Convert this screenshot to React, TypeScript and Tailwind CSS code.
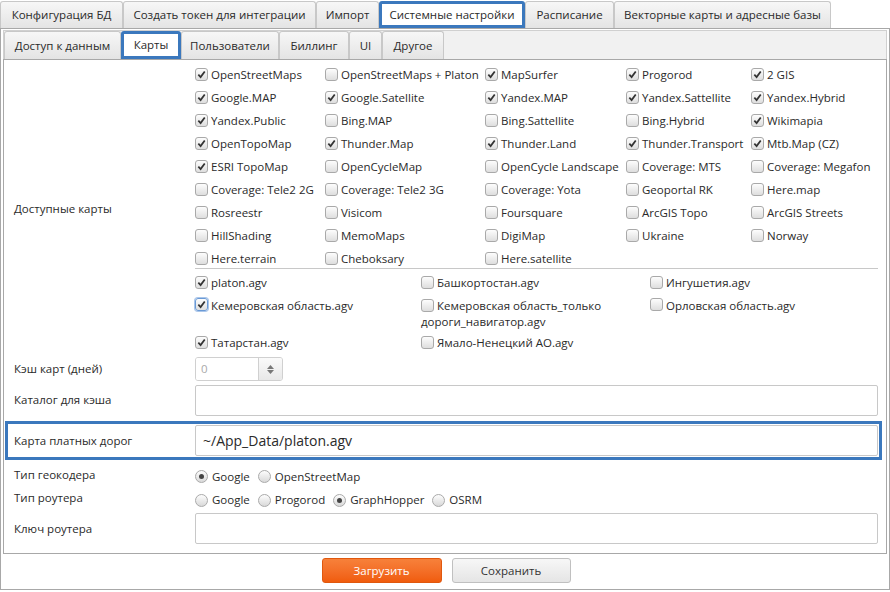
import React from 'react';

const topTabs = [
    { label: 'Конфигурация БД', w: 'w-[123px]' },
    { label: 'Создать токен для интеграции', w: 'w-[193px]' },
    { label: 'Импорт', w: 'w-[63px]' },
    { label: 'Системные настройки', w: 'w-[146px]', active: true },
    { label: 'Расписание', w: 'w-[89px]' },
    { label: 'Векторные карты и адресные базы', w: 'w-[217px]' },
];

const subTabs = [
    { label: 'Доступ к данным', w: 'w-[117px]' },
    { label: 'Карты', w: 'w-[60px]', active: true },
    { label: 'Пользователи', w: 'w-[98px]' },
    { label: 'Биллинг', w: 'w-[70px]' },
    { label: 'UI', w: 'w-[33px]' },
    { label: 'Другое', w: 'w-[62px]' },
];

// [label, checked]
const maps: [string, boolean][][] = [
    [['OpenStreetMaps', true], ['OpenStreetMaps + Platon', false], ['MapSurfer', true], ['Progorod', true], ['2 GIS', true]],
    [['Google.MAP', true], ['Google.Satellite', true], ['Yandex.MAP', true], ['Yandex.Sattellite', true], ['Yandex.Hybrid', true]],
    [['Yandex.Public', true], ['Bing.MAP', false], ['Bing.Sattellite', false], ['Bing.Hybrid', false], ['Wikimapia', true]],
    [['OpenTopoMap', true], ['Thunder.Map', true], ['Thunder.Land', true], ['Thunder.Transport', true], ['Mtb.Map (CZ)', true]],
    [['ESRI TopoMap', true], ['OpenCycleMap', false], ['OpenCycle Landscape', false], ['Coverage: MTS', false], ['Coverage: Megafon', false]],
    [['Coverage: Tele2 2G', false], ['Coverage: Tele2 3G', false], ['Coverage: Yota', false], ['Geoportal RK', false], ['Here.map', false]],
    [['Rosreestr', false], ['Visicom', false], ['Foursquare', false], ['ArcGIS Topo', false], ['ArcGIS Streets', false]],
    [['HillShading', false], ['MemoMaps', false], ['DigiMap', false], ['Ukraine', false], ['Norway', false]],
    [['Here.terrain', false], ['Cheboksary', false], ['Here.satellite', false]],
];

function Tab({ label, w, active }: { label: string; w: string; active?: boolean }) {
    return (
        <div
            className={`${w} h-full flex items-center justify-center rounded-t-[3px] ${
                active
                    ? 'bg-white border-[3px] border-[#3b78bd] rounded-none'
                    : 'bg-gradient-to-b from-[#f7f7f7] to-[#e4e4e4] border border-[#c8c8c8] border-b-0'
            }`}
        >
            {label}
        </div>
    );
}

function Checkbox({ checked, focused }: { checked: boolean; focused?: boolean }) {
    return (
        <span
            className={`w-[13px] h-[13px] shrink-0 rounded-[3px] border bg-gradient-to-b from-[#fdfdfd] to-[#dedede] flex items-center justify-center ${
                focused ? 'border-[#6a9ad6] shadow-[0_0_0_1px_#aac6ea]' : 'border-[#a9a9a9]'
            }`}
        >
            {checked && (
                <svg width="9" height="9" viewBox="0 0 10 10">
                    <path d="M1.5 5.2 L4 7.8 L8.6 1.6" fill="none" stroke="#333" strokeWidth="2" />
                </svg>
            )}
        </span>
    );
}

function Radio({ checked, label }: { checked?: boolean; label: string }) {
    return (
        <label className="flex items-center gap-[4px]">
            <span className="w-[13px] h-[13px] rounded-full border border-[#aaa] bg-gradient-to-b from-[#fdfdfd] to-[#d9d9d9] flex items-center justify-center">
                {checked && <span className="w-[5px] h-[5px] rounded-full bg-[#444]" />}
            </span>
            {label}
        </label>
    );
}

function CheckItem({ label, checked, focused }: { label: string; checked: boolean; focused?: boolean }) {
    return (
        <label className="flex items-center gap-[3px] h-[23px] whitespace-nowrap">
            <Checkbox checked={checked} focused={focused} />
            <span>{label}</span>
        </label>
    );
}

export default function App() {
    return (
        <div className="w-[890px] h-[592px] bg-white text-[11.5px] text-[#2a2a2a] font-['Open_Sans',sans-serif] overflow-hidden">
            {/* Top tabs */}
            <div className="flex h-[28px] items-end pt-[1px]">
                {topTabs.map((t) => (
                    <Tab key={t.label} {...t} />
                ))}
            </div>

            <div className="border border-[#a8a8a8] h-[562px] pt-[1px] px-[2px] flex flex-col">
                {/* Sub tabs */}
                <div className="flex h-[29px] bg-[#f1f1f1] border border-[#d0d0d0] border-b-0 items-end">
                    {subTabs.map((t) => (
                        <Tab key={t.label} {...t} />
                    ))}
                </div>

                {/* Content */}
                <div className="border border-[#a8a8a8] h-[495px] pt-[3px] pr-[8px]">
                    {/* Доступные карты */}
                    <div className="flex">
                        <div className="w-[191px] pl-[10px] flex items-center">Доступные карты</div>
                        <div className="flex-1">
                            <div className="grid grid-cols-[130px_160px_141px_125px_1fr] auto-rows-[23px] h-[206px] border-b border-[#c8c8c8]">
                                {maps.flat().map(([label, checked]) => (
                                    <CheckItem key={label} label={label} checked={checked} />
                                ))}
                            </div>
                            <div className="grid grid-cols-[226px_229px_1fr] pt-[2px] pb-[1px]">
                                <CheckItem label="platon.agv" checked />
                                <CheckItem label="Башкортостан.agv" checked={false} />
                                <CheckItem label="Ингушетия.agv" checked={false} />
                                <div className="h-[37px] pt-[4px] flex items-start gap-[3px]">
                                    <Checkbox checked focused />
                                    <span className="leading-[15px]">Кемеровская область.agv</span>
                                </div>
                                <div className="h-[37px] pt-[4px] leading-[16px]">
                                    <span className="inline-block align-[-2px] mr-[3px]">
                                        <Checkbox checked={false} />
                                    </span>
                                    Кемеровская область_только дороги_навигатор.agv
                                </div>
                                <div className="h-[37px] pt-[4px] flex items-start gap-[3px]">
                                    <Checkbox checked={false} />
                                    <span className="leading-[15px]">Орловская область.agv</span>
                                </div>
                                <CheckItem label="Татарстан.agv" checked />
                                <CheckItem label="Ямало-Ненецкий АО.agv" checked={false} />
                            </div>
                        </div>
                    </div>

                    {/* Кэш карт */}
                    <div className="flex items-center h-[28px]">
                        <div className="w-[191px] pl-[10px]">Кэш карт (дней)</div>
                        <div className="flex h-[24px] w-[88px] border border-[#d0d0d0] rounded-[3px] overflow-hidden">
                            <div className="flex-1 pl-[5px] flex items-center text-[#aaa] bg-white">0</div>
                            <div className="w-[24px] border-l border-[#d0d0d0] bg-gradient-to-b from-[#fafafa] to-[#e8e8e8] flex flex-col items-center justify-center gap-[1px]">
                                <svg width="7" height="4" viewBox="0 0 7 4"><path d="M0 4 L3.5 0 L7 4Z" fill="#777" /></svg>
                                <svg width="7" height="4" viewBox="0 0 7 4"><path d="M0 0 L3.5 4 L7 0Z" fill="#777" /></svg>
                            </div>
                        </div>
                    </div>

                    {/* Каталог */}
                    <div className="flex items-center h-[34px]">
                        <div className="w-[191px] pl-[10px]">Каталог для кэша</div>
                        <div className="flex-1 h-[31px] border border-[#c8c8c8] rounded-[2px]" />
                    </div>

                    {/* Карта платных дорог */}
                    <div className="mt-[4px] ml-[1px] mr-[-4px] border-[3px] border-[#3b78bd] flex items-center h-[39px]">
                        <div className="w-[187px] pl-[6px]">Карта платных дорог</div>
                        <div className="flex-1 mr-[1px] h-[31px] border border-[#c8c8c8] rounded-[2px] flex items-center pl-[7px] text-[14px]">
                            ~/App_Data/platon.agv
                        </div>
                    </div>

                    {/* Тип геокодера */}
                    <div className="flex items-center h-[23px] mt-[5px]">
                        <div className="w-[191px] pl-[10px] -mt-[4px]">Тип геокодера</div>
                        <div className="flex gap-[8px]">
                            <Radio checked label="Google" />
                            <Radio label="OpenStreetMap" />
                        </div>
                    </div>

                    {/* Тип роутера */}
                    <div className="flex items-center h-[24px]">
                        <div className="w-[191px] pl-[10px] -mt-[4px]">Тип роутера</div>
                        <div className="flex gap-[8px]">
                            <Radio label="Google" />
                            <Radio label="Progorod" />
                            <Radio checked label="GraphHopper" />
                            <Radio label="OSRM" />
                        </div>
                    </div>

                    {/* Ключ роутера */}
                    <div className="flex items-center h-[31px] mt-[1px]">
                        <div className="w-[191px] pl-[10px]">Ключ роутера</div>
                        <div className="flex-1 h-[31px] border border-[#c8c8c8] rounded-[2px]" />
                    </div>
                </div>

                {/* Buttons */}
                <div className="flex justify-center gap-[10px] pt-[4px] pl-[2px]">
                    <button className="w-[120px] h-[25px] rounded-[3px] bg-gradient-to-b from-[#f7813a] to-[#f05c0c] border border-[#e0580e] text-white text-[11.5px]">
                        Загрузить
                    </button>
                    <button className="w-[119px] h-[25px] rounded-[3px] bg-gradient-to-b from-[#f7f7f7] to-[#e5e5e5] border border-[#c0c0c0] text-[#333] text-[11.5px]">
                        Сохранить
                    </button>
                </div>
            </div>
        </div>
    );
}
